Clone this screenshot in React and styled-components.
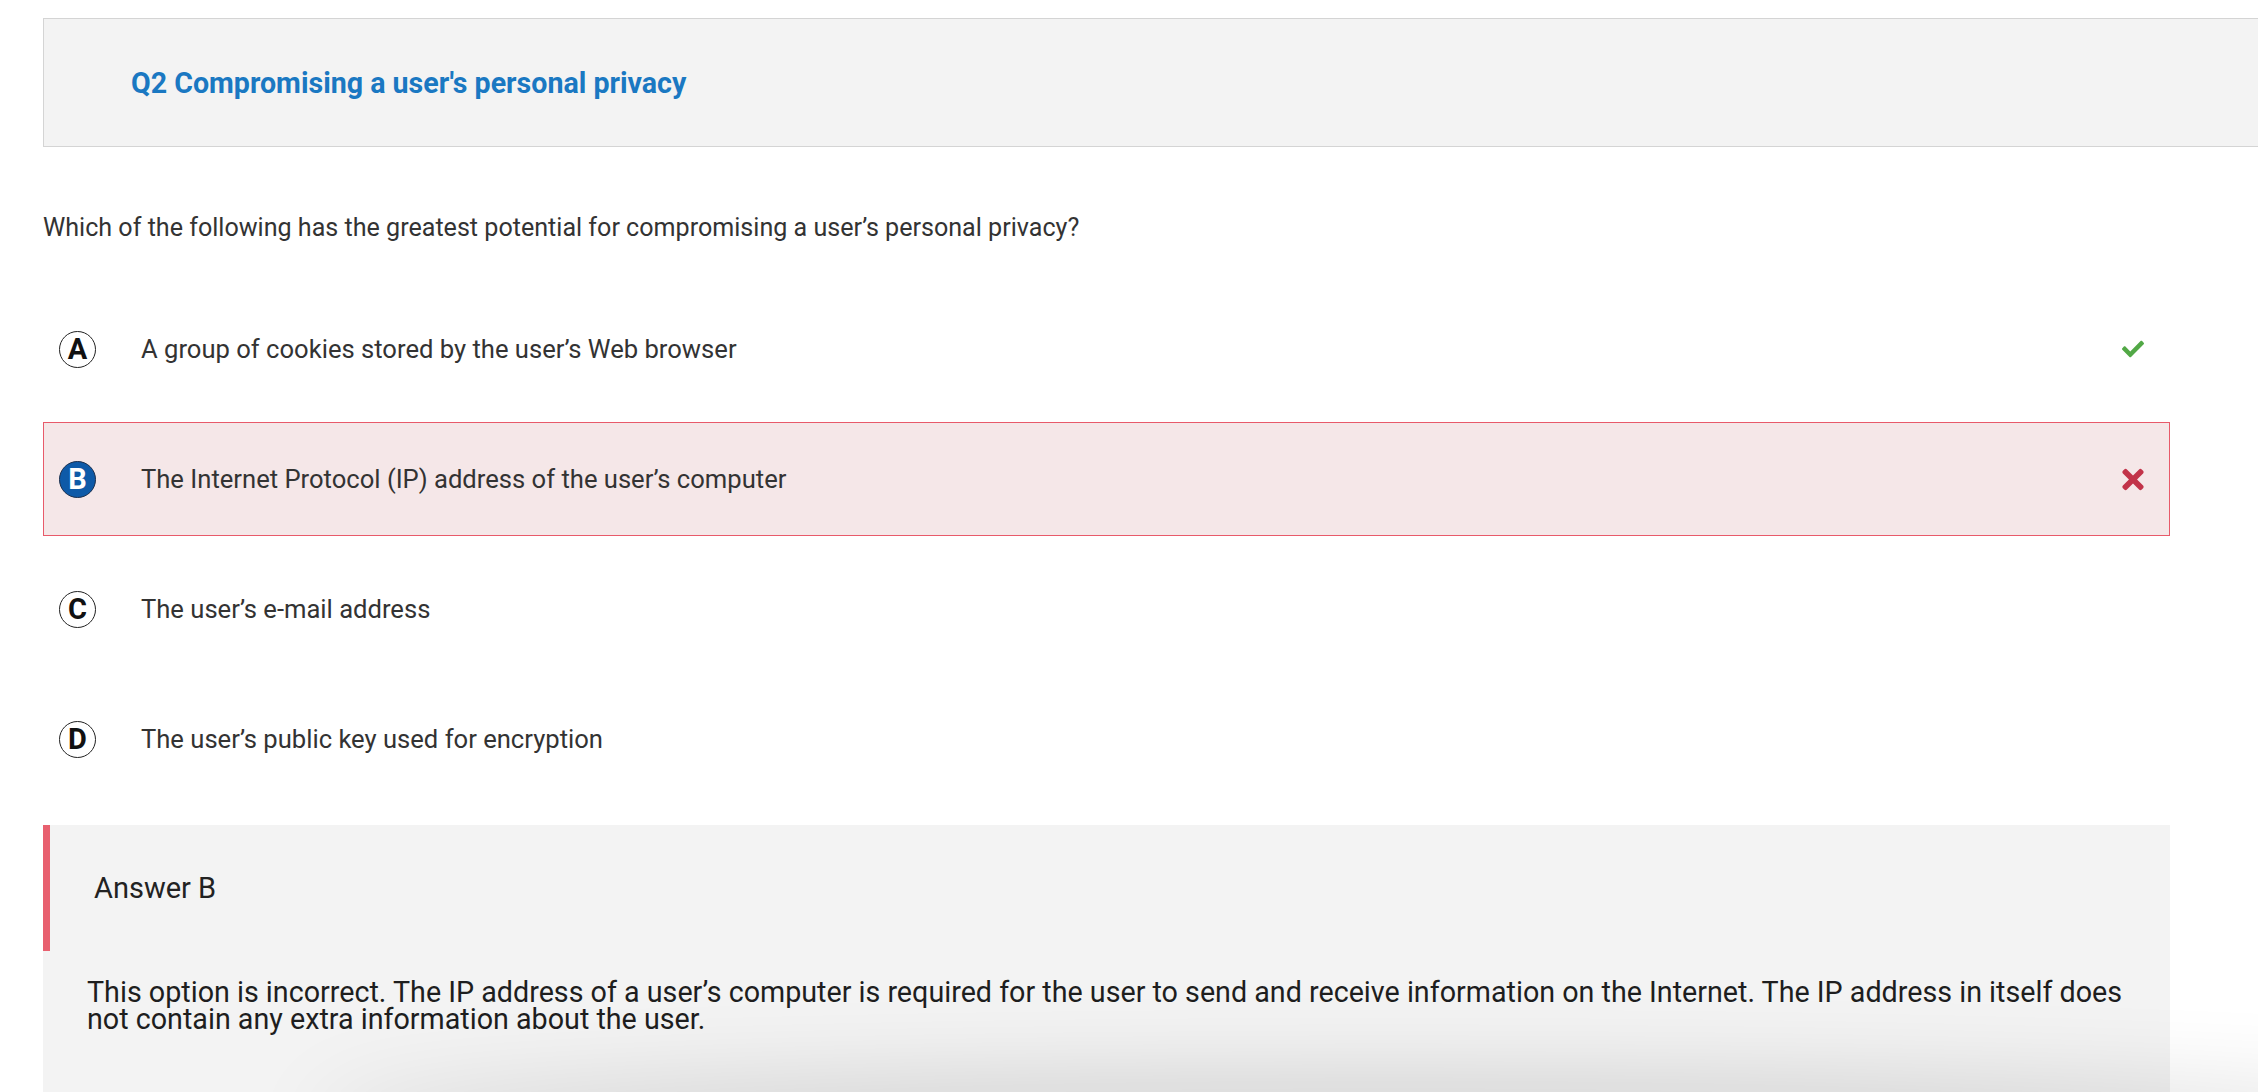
import React from "react";
import styled, { createGlobalStyle } from "styled-components";
import { FaCheck, FaTimes } from "react-icons/fa";

const Global = createGlobalStyle`
  html, body { margin: 0; padding: 0; background: #ffffff; }
  body { font-family: Roboto, "Noto Sans", "Liberation Sans", sans-serif; color: #333; overflow: hidden; }
`;

const Page = styled.div`
  padding: 18px 0 0 43px;
  min-height: 1092px;
  box-sizing: border-box;
`;

const Header = styled.div`
  height: 129px;
  box-sizing: border-box;
  background: #f3f3f3;
  border: 1px solid #d4d4d4;
  border-right: none;
  display: flex;
  align-items: center;
  padding-left: 87px;
`;

const Title = styled.h2`
  margin: 0;
  font-size: 28.6px;
  font-weight: 700;
  color: #1a78c2;
  letter-spacing: 0;
`;

const Question = styled.p`
  margin: 66px 0 0 0;
  font-size: 25.1px;
  line-height: 30px;
  color: #333;
`;

const Options = styled.div`
  margin: 49px 88px 0 0;
  display: flex;
  flex-direction: column;
  gap: 16px;
`;

const Row = styled.div`
  height: 114px;
  box-sizing: border-box;
  display: flex;
  align-items: center;
  padding: 0 25px 0 15px;
  border: 1px solid ${(p) => (p.$wrong ? "#e85a6a" : "transparent")};
  background: ${(p) => (p.$wrong ? "#f5e7e8" : "transparent")};
`;

const Bubble = styled.span`
  width: 37px;
  height: 37px;
  box-sizing: border-box;
  border-radius: 50%;
  display: flex;
  align-items: center;
  justify-content: center;
  flex: none;
  font-size: 29px;
  font-weight: 700;
  line-height: 1;
  color: ${(p) => (p.$selected ? "#ffffff" : "#111")};
  background: ${(p) => (p.$selected ? "#0e5aa8" : "#ffffff")};
  border: ${(p) => (p.$selected ? "1.5px solid #1b2f4d" : "1px solid #222")};
`;

const OptionText = styled.span`
  margin-left: 45px;
  flex: 1;
  font-size: 25.6px;
  line-height: 30px;
  color: #333;
`;

const Mark = styled.span`
  width: 22px;
  display: flex;
  justify-content: center;
  color: ${(p) => (p.$ok ? "#52a846" : "#c23349")};
  font-size: ${(p) => (p.$ok ? "22px" : "31px")};
`;

const AnswerBox = styled.div`
  margin: 29px 88px 0 0;
  background: #f3f3f3;
`;

const AnswerHead = styled.div`
  height: 126px;
  box-sizing: border-box;
  border-left: 7px solid #e8606f;
  display: flex;
  align-items: center;
  padding-left: 44px;
  font-size: 29px;
  color: #222;
`;

const Explanation = styled.p`
  margin: 0;
  padding: 28px 44px 80px 44px;
  font-size: 28.7px;
  line-height: 27px;
  color: #1e1e1e;
`;

const BottomShade = styled.div`
  position: fixed;
  left: 320px;
  right: -200px;
  bottom: -60px;
  height: 60px;
  border-radius: 50%;
  box-shadow: 0 0 90px 10px rgba(0, 0, 0, 0.16);
  pointer-events: none;
`;

const options = [
  { key: "A", text: "A group of cookies stored by the user’s Web browser", mark: "ok" },
  { key: "B", text: "The Internet Protocol (IP) address of the user’s computer", mark: "wrong", selected: true },
  { key: "C", text: "The user’s e-mail address" },
  { key: "D", text: "The user’s public key used for encryption" },
];

export default function App() {
  return (
    <>
      <Global />
      <Page>
        <Header>
          <Title>Q2 Compromising a user's personal privacy</Title>
        </Header>
        <Question>
          Which of the following has the greatest potential for compromising a user’s personal privacy?
        </Question>
        <Options>
          {options.map((o) => (
            <Row key={o.key} $wrong={o.mark === "wrong"}>
              <Bubble $selected={o.selected}>{o.key}</Bubble>
              <OptionText>{o.text}</OptionText>
              {o.mark && (
                <Mark $ok={o.mark === "ok"}>
                  {o.mark === "ok" ? <FaCheck /> : <FaTimes />}
                </Mark>
              )}
            </Row>
          ))}
        </Options>
        <AnswerBox>
          <AnswerHead>Answer B</AnswerHead>
          <Explanation>
            This option is incorrect. The IP address of a user’s computer is required for the user to send and
            receive information on the Internet. The IP address in itself does not contain any extra information
            about the user.
          </Explanation>
        </AnswerBox>
      </Page>
      <BottomShade />
    </>
  );
}
